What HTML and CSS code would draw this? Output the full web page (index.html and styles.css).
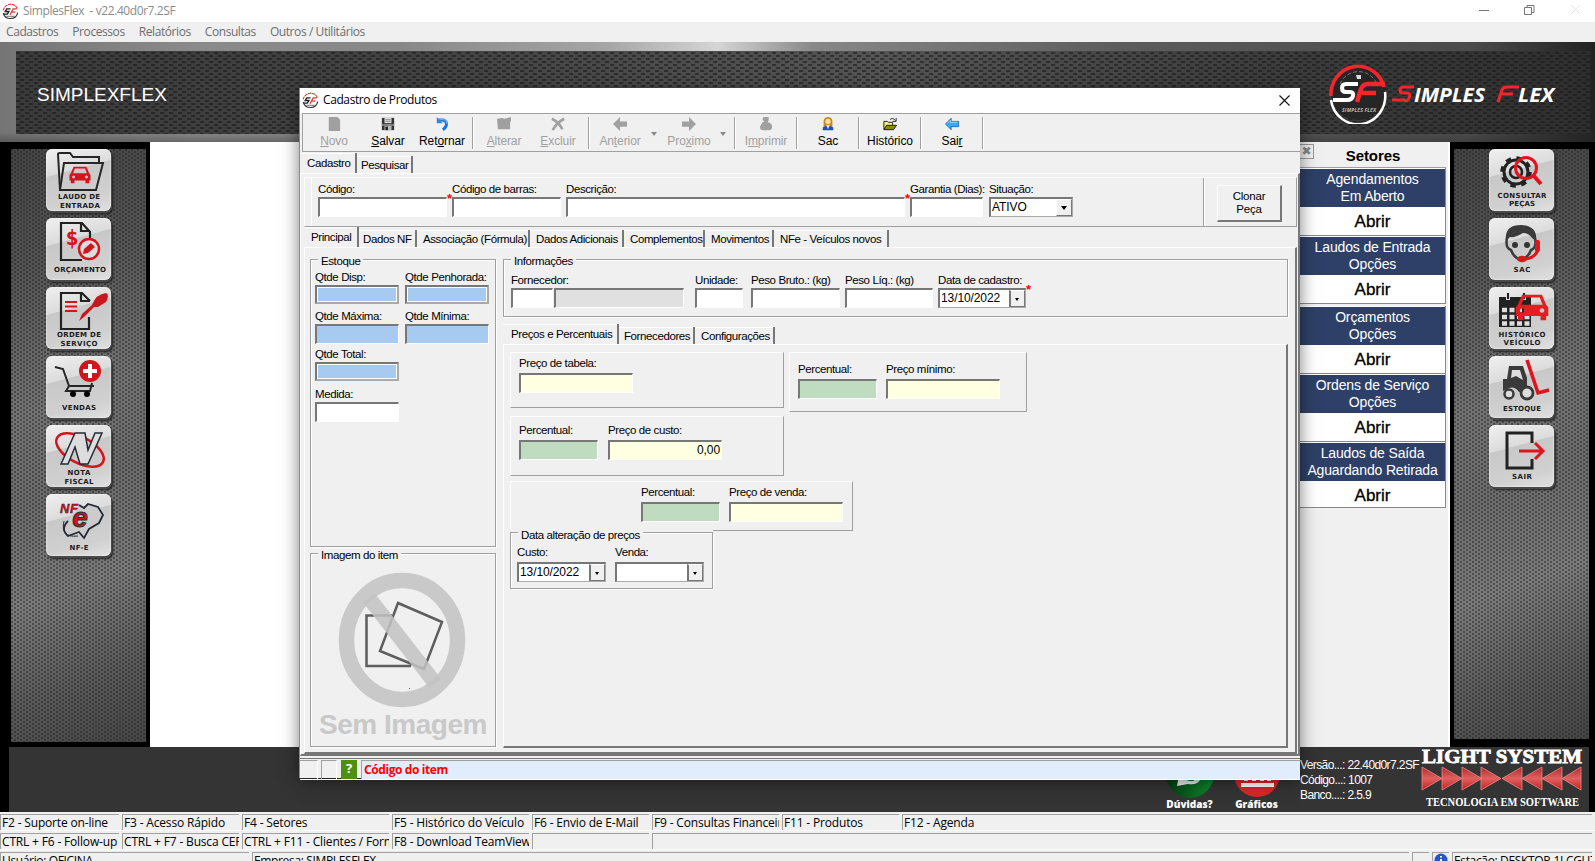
FILE: index.html
```
<!DOCTYPE html>
<html lang="pt-BR">
<head>
<meta charset="utf-8">
<title>SimplesFlex</title>
<link rel="stylesheet" href="styles.css">
</head>
<body>
<svg width="0" height="0" class="defs">
  <defs>
    <symbol id="sf" viewBox="0 0 16 16">
      <path d="M1.2 7A7 7 0 0 1 14.6 5.500" fill="none" stroke="#e33" stroke-width="1.100" stroke-dasharray="3 .6"/>
      <path d="M1.200 9.500A7 7 0 0 0 14.800 9" fill="none" stroke="#333" stroke-width="1.100"/>
      <path d="M8 5.500H4.500L3 8H6.500L5 10.500H1.500" fill="none" stroke="#222" stroke-width="1.300"/>
      <path d="M14 5.500H10.500L7.500 11M9.500 8.500H12.500" fill="none" stroke="#e33" stroke-width="1.200"/>
      <path d="M4 12.500h8" stroke="#777"/>
    </symbol>
    <symbol id="car" viewBox="0 0 24 20">
      <path d="M5 1h14l3 7 1.500 2v6H22v3h-4v-3H6v3H2v-3H.5v-6L2 8zM6.500 3L4.500 8h15l-2-5zM5 10.500a1.600 1.600 0 1 0 .1 0M19 10.500a1.600 1.600 0 1 0 .1 0" fill-rule="evenodd"/>
    </symbol>
  </defs>
</svg>
<div class="app">
  <header class="titlebar">
    <svg class="sf-icon" width="17" height="17"><use href="#sf"/></svg>
    <span class="caption">SimplesFlex&nbsp; - v22.40d0r7.2SF</span>
    <svg class="winbtns" width="120" height="20" fill="none" stroke="#777">
      <path d="M4 9.500h10"/><path d="M49.500 6.500h7v7h-7zM52 6V4.500h7v7H57"/><path stroke="#e4e4e4" d="M96 4l9 9M105 4l-9 9"/>
    </svg>
  </header>
  <nav class="menubar"><span>Cadastros</span><span>Processos</span><span>Relatórios</span><span>Consultas</span><span>Outros / Utilitários</span></nav>

  <section class="banner">
    <div class="banner-in">
      <span class="brand">SIMPLEXFLEX</span>
      <svg class="logo" width="232" height="62" viewBox="0 0 232 62">
        <circle cx="30" cy="31" r="27" fill="#262626"/>
        <path d="M3 34A27 28 0 0 1 56 25" fill="none" stroke="#f3262b" stroke-width="3.500"/>
        <path d="M57 30A27 28 0 0 1 3 38" fill="none" stroke="#fff" stroke-width="2.500"/>
        <path d="M12 22A20 20 0 0 1 48 20" fill="none" stroke="#777" stroke-dasharray="4 2"/>
        <path d="M28 13h5v4h-4z" fill="#ddd"/>
        <path d="M30 22H18Q14 22 14 26T18 30H22Q26 30 25 34T19 38H5" fill="none" stroke="#fff" stroke-width="4"/>
        <path d="M57 22H40Q35 22 33 27L29 40M34 31H48" fill="none" stroke="#f3262b" stroke-width="4.500"/>
        <text x="14" y="50" font-size="5" textLength="34" class="lt small">SIMPLES FLEX</text>
        <path d="M86 25H76Q72 25 72 28T75 31H80Q83 32 81 36T76 38H64" fill="none" stroke="#f3262b" stroke-width="3"/>
        <text x="86" y="40" font-size="20" textLength="71" lengthAdjust="spacingAndGlyphs" class="lt">IMPLES</text>
        <path d="M191 25H179Q175 25 174 28L170 40M174 32H185" fill="none" stroke="#f3262b" stroke-width="3"/>
        <text x="190" y="40" font-size="20" textLength="36" lengthAdjust="spacingAndGlyphs" class="lt">LEX</text>
      </svg>
    </div>
  </section>

  <main class="work">
    <aside class="rail rail-left">
      <div class="mesh">
        <svg class="tile" viewBox="0 0 65 62"><g fill="none" stroke="#262626" stroke-width="2"><path d="M14 41L12 5Q12 4 14 4H24L27 8H53V14"/><path d="M18 14H57L50 41H14Z"/></g><use href="#car" x="23" y="16" width="22" height="20" fill="#d4141c"/><text x="33" y="50" textLength="42">LAUDO DE</text><text x="34" y="59" textLength="40">ENTRADA</text></svg>
        <svg class="tile" viewBox="0 0 65 62"><path d="M44 22V14L36 5H15V42H36M35 5V13H43" fill="none" stroke="#222" stroke-width="2.200"/><text x="26" y="27" class="dollar">$</text><circle cx="43" cy="31" r="10" fill="#ddd" stroke="#d4141c" stroke-width="2.500"/><path d="M37 36l1-5 7-6 4 4-7 6z" fill="#d4141c"/><text x="34" y="54" textLength="52">ORÇAMENTO</text></svg>
        <svg class="tile" viewBox="0 0 65 62"><path d="M43 30V42H15V6H36L44 14M35 6V14H44" fill="none" stroke="#222" stroke-width="2.200"/><path d="M19 15h12M19 19.500h12M19 24h12" stroke="#d4141c" stroke-width="2"/><path d="M33 34L36 27 46 18Q50 7 60 6 64 8 60 15L52 20 48 20 38 30z" fill="#c9171f"/><text x="33" y="50" textLength="44">ORDEM DE</text><text x="33" y="59" textLength="37">SERVIÇO</text></svg>
        <svg class="tile" viewBox="0 0 65 62"><path d="M9 11L17 13 23 30H48M23 30L20 35H44L46 27" fill="none" stroke="#262626" stroke-width="2"/><circle cx="27" cy="38" r="3"/><circle cx="41" cy="38" r="3"/><circle cx="44" cy="15" r="11" fill="#d4141c"/><path d="M44 8v14M37 15h14" stroke="#fff" stroke-width="4"/><text x="33" y="54" textLength="34">VENDAS</text></svg>
        <svg class="tile" viewBox="0 0 65 62"><ellipse cx="34" cy="25" rx="26" ry="13" transform="rotate(28 34 25)" fill="none" stroke="#d4141c" stroke-width="2.500"/><path d="M15 39L29 8H39L42 25 49 8H56L42 39H34L29 22 22 39Z" fill="#ddd" stroke="#252b35" stroke-width="1.500"/><text x="33" y="50" textLength="23">NOTA</text><text x="33" y="59" textLength="29">FISCAL</text></svg>
        <svg class="tile" viewBox="0 0 65 62"><path d="M33 11L38 14 42 10 52 13 57 21 53 29 43 35 38 44 33 38 22 42Q14 35 22 27" fill="#ccc" stroke="#252b35" stroke-width="1.800"/><path d="M18 27Q14 44 32 42" fill="none" stroke="#252b35"/><text x="23" y="19" class="nf" textLength="18">NF</text><text x="34" y="33" class="nfe">e</text><text x="33" y="56" textLength="19">NF-E</text></svg>
      </div>
    </aside>
    <div class="canvas"></div>
    <section class="sectors">
      <div class="sec-head"><i class="close-x">✖</i><b>Setores</b></div>
      <div class="sec"><p>Agendamentos<br>Em Aberto</p><b>Abrir</b></div>
      <div class="sec"><p>Laudos de Entrada<br>Opções</p><b>Abrir</b></div>
      <div class="sec wide"><p>Orçamentos<br>Opções</p><b>Abrir</b></div>
      <div class="sec"><p>Ordens de Serviço<br>Opções</p><b>Abrir</b></div>
      <div class="sec last"><p>Laudos de Saída<br>Aguardando Retirada</p><b>Abrir</b></div>
    </section>
    <aside class="rail rail-right">
      <div class="mesh">
        <svg class="tile" viewBox="0 0 65 62"><circle cx="27" cy="23" r="12" fill="none" stroke="#222" stroke-width="3"/><circle cx="27" cy="23" r="14" fill="none" stroke="#222" stroke-width="3.500" stroke-dasharray="5.500 5.500"/><circle cx="27" cy="23" r="6" fill="none" stroke="#222" stroke-width="2.500"/><circle cx="37" cy="19" r="10.500" fill="none" stroke="#e0141c" stroke-width="3"/><path d="M44 26L52 35" stroke="#e0141c" stroke-width="4"/><text x="33" y="49" textLength="49">CONSULTAR</text><text x="33" y="57" textLength="26">PEÇAS</text></svg>
        <svg class="tile" viewBox="0 0 65 62"><path d="M17 23Q15 7 32 7 49 8 47 23L43 20Q40 15 34 15 26 20 21 19Z" fill="#3b3b3b"/><path d="M18 20Q16 30 22 32 25 40 32 42 39 40 42 32 48 30 46 20" fill="none" stroke="#3b3b3b" stroke-width="2.500"/><circle cx="26" cy="27" r="3" fill="#333"/><circle cx="38" cy="27" r="3" fill="#333"/><path d="M48 22V34Q45 40 36 41" fill="none" stroke="#e0141c" stroke-width="3"/><rect x="46" y="22" width="5" height="12" rx="2.500" fill="#e0141c"/><ellipse cx="33" cy="41" rx="5" ry="3.200" fill="#e0141c"/><text x="33" y="54" textLength="17">SAC</text></svg>
        <svg class="tile" viewBox="0 0 65 62"><path d="M10 10H42V40H10Z" fill="#222"/><path d="M19 6v7M35 6v7" stroke="#ddd" stroke-width="4"/><path d="M19 6v6M35 6v6" stroke="#222" stroke-width="2"/><g stroke="#ddd" stroke-width="4.500" stroke-dasharray="5 2.500"><path d="M13 23h28M13 30h28M13 36.500h28"/></g><use href="#car" x="26" y="6" width="34" height="29" fill="#e81c20"/><text x="33" y="50" textLength="47">HISTÓRICO</text><text x="33" y="58" textLength="37">VEÍCULO</text></svg>
        <svg class="tile" viewBox="0 0 65 62"><path d="M14 35V23H18L20 10H34L38 22V36H30Q26 30 20 32Z" fill="#3a3a3a"/><path d="M23 14H31L34 24 27 20 22 22Z" fill="#ddd"/><circle cx="20" cy="38" r="4.500" fill="#ddd" stroke="#3a3a3a" stroke-width="2.500"/><circle cx="38" cy="37" r="6" fill="#ddd" stroke="#3a3a3a" stroke-width="2.800"/><path d="M38 4L49 37 60 34" fill="none" stroke="#e0141c" stroke-width="3.500"/><text x="33" y="55" textLength="38">ESTOQUE</text></svg>
        <svg class="tile" viewBox="0 0 65 62"><path d="M43 18V8H18V43H43V34" fill="none" stroke="#222" stroke-width="3"/><path d="M30 26H53M46 18L54 26 46 34" fill="none" stroke="#e0141c" stroke-width="3"/><text x="33" y="54" textLength="20">SAIR</text></svg>
      </div>
    </aside>
  </main>

  <section class="foot">
    <div class="round"><svg width="50" height="32" viewBox="0 0 50 32"><defs><linearGradient id="gg"><stop stop-color="#063b10"/><stop offset="1" stop-color="#0c8a2c"/></linearGradient></defs><circle cx="25" cy="7" r="24" fill="url(#gg)"/><path d="M12 19L14 8H37Q35 19 23 17Z" fill="#eee"/><path d="M20 8Q22 14 29 12" stroke="#0a6a20" stroke-width="3" fill="none"/></svg><b>Dúvidas?</b></div>
    <div class="round"><svg width="50" height="32" viewBox="0 0 50 32"><circle cx="25" cy="7" r="23" fill="#dc2626"/><path d="M14 4v10M22 4v10M30 4v10M37 4v10" stroke="#fff" stroke-width="4"/><path d="M9 18h33" stroke="#fff" stroke-width="4"/></svg><b>Gráficos</b></div>
    <div class="vers">Versão...: 22.40d0r7.2SF<br>Código...: 1007<br>Banco....: 2.5.9</div>
    <svg class="light" width="166" height="65" viewBox="0 0 166 65">
      <defs><linearGradient id="lr" x2="0" y2="1"><stop stop-color="#b02a2a"/><stop offset=".5" stop-color="#e06060"/><stop offset="1" stop-color="#c42020"/></linearGradient></defs>
      <text x="2" y="16" class="l1" textLength="160" lengthAdjust="spacingAndGlyphs">LIGHT SYSTEM</text>
      <path d="M2 20l20 11.500L2 43zM22 20l20 11.500L22 43zM42 20l20 11.500L42 43zM61 20l20 11.500L61 43zM102 20L82 31.500 102 43zM122 20l-20 11.500 20 11.500zM142 20l-20 11.500 20 11.500zM161 20l-19 11.500 19 11.500z" fill="url(#lr)" stroke="#e88" stroke-width=".8"/>
      <text x="6" y="59" class="l2" textLength="153" lengthAdjust="spacingAndGlyphs">TECNOLOGIA EM SOFTWARE</text>
    </svg>
  </section>

  <footer class="status">
    <div class="srow r1"><span>F2 - Suporte on-line</span><span>F3 - Acesso Rápido</span><span>F4 - Setores</span><span>F5 - Histórico do Veículo</span><span>F6 - Envio de E-Mail</span><span>F9 - Consultas Financeiras</span><span>F11 - Produtos</span><span>F12 - Agenda</span></div>
    <div class="srow r2"><span>CTRL + F6 - Follow-up</span><span>CTRL + F7 - Busca CEP</span><span>CTRL + F11 - Clientes / Fornecedores</span><span>F8 - Download TeamViewer</span><span></span><span></span></div>
    <div class="srow r3"><span>Usuário: OFICINA</span><span>Empresa: SIMPLESFLEX</span><span></span><span class="info"><svg width="14" height="14"><circle cx="7" cy="7" r="6.500" fill="#2456c8"/><path d="M7 3v1.500M7 6v5" stroke="#fff" stroke-width="2"/></svg></span><span>Estação: DESKTOP-1LCGU7</span></div>
  </footer>
</div>

<section class="dialog">
  <header class="dtitle">
    <svg width="17" height="17"><use href="#sf"/></svg><span>Cadastro de Produtos</span>
    <svg class="dclose" width="11" height="11" stroke="#111" stroke-width="1.100"><path d="M.5.5l10 10M10.500.5l-10 10"/></svg>
  </header>
  <div class="toolbar">
    <div class="tb off"><svg viewBox="0 0 16 16"><path d="M2 0h10l3 3v13H2z" fill="#a0a0a0"/></svg><span><u>N</u>ovo</span></div>
    <div class="tb"><svg viewBox="0 0 16 16"><path d="M1 1h14v14H1z" fill="#333"/><path d="M4 1h8v6H4z" fill="#ddd"/><path d="M5 3h6M5 5h6" stroke="#888"/><path d="M1 8h14v2H1z" fill="#888"/><path d="M4 10h8v5H4z" fill="#bbb"/><path d="M5 11h3v4H5z" fill="#222"/></svg><span><u>S</u>alvar</span></div>
    <div class="tb"><svg viewBox="0 0 16 16"><path d="M4 3.500h5q5 1 4 6-1 3-4 5" fill="none" stroke="#1c6fe0" stroke-width="3.400"/><path d="M2 0v7h7z" fill="#2f86f0"/><path d="M5 3h5q4 1 3.500 5" fill="none" stroke="#7cc0ff"/></svg><span>Ret<u>o</u>rnar</span></div>
    <i class="sep"></i>
    <div class="tb off"><svg viewBox="0 0 16 16"><path d="M0 2l6-1 3 1 7-2v4l-1 2v8H1z" fill="#a0a0a0"/></svg><span><u>A</u>lterar</span></div>
    <div class="tb off"><svg viewBox="0 0 16 16"><path d="M1 2q8 4 12 12M15 2Q6 7 2 15" fill="none" stroke="#a0a0a0" stroke-width="3"/></svg><span><u>E</u>xcluir</span></div>
    <i class="sep"></i>
    <div class="tb off"><svg viewBox="0 0 16 16"><path d="M0 8l8-8v5h8v6H8v5z" fill="#a0a0a0"/></svg><span>An<u>t</u>erior</span></div><i class="dd"></i>
    <div class="tb off"><svg viewBox="0 0 16 16"><path d="M16 8L8 0v5H0v6h8v5z" fill="#a0a0a0"/></svg><span>Pro<u>x</u>imo</span></div><i class="dd"></i>
    <i class="sep"></i>
    <div class="tb off"><svg viewBox="0 0 16 16"><path d="M5 0h6v4l-1 2q5 1 5 5t-4 4H5q-4 0-4-4l3-5 2-1-2-2z" fill="#a0a0a0"/></svg><span>I<u>m</u>primir</span></div>
    <i class="sep"></i>
    <div class="tb"><svg viewBox="0 0 16 16"><path d="M3 8q-1-8 5-8t5 8v3H3z" fill="#c98a1c"/><circle cx="8" cy="5" r="3" fill="#ffdda0"/><path d="M2 15v-3q3-3 6-1 3-2 6 1v3z" fill="#1f4fc0"/><path d="M6 9h4l-2 5z" fill="#f7e6c0"/></svg><span>Sac</span></div>
    <i class="sep"></i>
    <div class="tb"><svg viewBox="0 0 16 16"><path d="M1 14V5h4l1 1h5v3" fill="#f2ec8c" stroke="#111"/><path d="M1 14.500L4 9.500h11.500L12 14.500z" fill="#8d8a14" stroke="#111"/><path d="M8 3q3-3 6 1M15 1v4h-4" fill="none" stroke="#111"/></svg><span>Histórico</span></div>
    <i class="sep"></i>
    <div class="tb"><svg viewBox="0 0 16 16"><path d="M.6 8L7 1.500V5h8.500v6H7v3.500z" fill="#3fa9e8" stroke="#1a6cb0"/><path d="M3 7l3-3v2h8" fill="none" stroke="#a5dcff"/></svg><span>Sai<u>r</u></span></div>
    <i class="sep"></i>
  </div>
  <div class="tabs t1"><span class="on">Cadastro</span><span>Pesquisar</span></div>
  <div class="page page1">
    <div class="keybar">
      <div class="keys">
        <label class="f req w129">Código:<i class="in"></i></label>
        <label class="f w109">Código de barras:<i class="in"></i></label>
        <label class="f req w339">Descrição:<i class="in"></i></label>
        <label class="f w73">Garantia (Dias):<i class="in"></i></label>
        <label class="f w84">Situação:<i class="in combo">ATIVO<b></b></i></label>
      </div>
      <div class="clone"><button>Clonar<br>Peça</button></div>
    </div>
    <div class="tabs t2"><span class="on">Principal</span><span>Dados NF</span><span>Associação (Fórmula)</span><span>Dados Adicionais</span><span>Complementos</span><span>Movimentos</span><span>NFe - Veículos novos</span></div>
    <div class="page page2">
      <div class="colL">
        <div class="group estoque"><span class="legend">Estoque</span>
          <div class="q q1"><label class="f">Qtde Disp:<i class="in blue ring"></i></label><label class="f">Qtde Penhorada:<i class="in blue ring"></i></label></div>
          <div class="q q2"><label class="f">Qtde Máxima:<i class="in blue"></i></label><label class="f">Qtde Mínima:<i class="in blue"></i></label></div>
          <div class="q q3"><label class="f">Qtde Total:<i class="in blue ring"></i></label></div>
          <div class="q q4"><label class="f">Medida:<i class="in"></i></label></div>
        </div>
        <div class="group imagem"><span class="legend">Imagem do item</span>
          <svg width="183" height="180" viewBox="0 0 183 180">
            <ellipse cx="91" cy="78" rx="55.500" ry="59.500" fill="none" stroke="#c9c9c9" stroke-width="15.500"/>
            <g fill="none" stroke="#5e5e5e" stroke-width="2.500"><path d="M81 53.500H55.500V104H100"/><path d="M87 41L131 60 113 107 69 89Z"/></g>
            <path d="M58 36L124 121" stroke="#c3c3c3" stroke-width="15" opacity=".85"/>
            <text x="8" y="172" textLength="168" class="semimg">Sem Imagem</text>
            <path d="M98 126.500h1" stroke="#d0d"/>
          </svg>
        </div>
      </div>
      <div class="colR">
        <div class="group infos"><span class="legend">Informações</span>
          <div class="inforow">
            <label class="f w42">Fornecedor:<i class="in"></i></label><i class="in grey"></i>
            <label class="f w48">Unidade:<i class="in"></i></label>
            <label class="f w89">Peso Bruto.: (kg)<i class="in"></i></label>
            <label class="f w88">Peso Líq.: (kg)<i class="in"></i></label>
            <label class="f req w88">Data de cadastro:<i class="in combo date">13/10/2022<b></b></i></label>
          </div>
        </div>
        <div class="tabs t3"><span class="on">Preços e Percentuais</span><span>Fornecedores</span><span>Configurações</span></div>
        <div class="page page3">
          <div class="prow">
            <div class="pan pa"><label class="f w114">Preço de tabela:<i class="in yel"></i></label></div>
            <div class="pan pb"><label class="f w79">Percentual:<i class="in grn"></i></label><label class="f w114">Preço mínimo:<i class="in yel"></i></label></div>
          </div>
          <div class="pan pc"><label class="f w79">Percentual:<i class="in grn"></i></label><label class="f w114">Preço de custo:<i class="in yel num">0,00</i></label></div>
          <div class="pan pd"><label class="f w79">Percentual:<i class="in grn"></i></label><label class="f w114">Preço de venda:<i class="in yel"></i></label></div>
          <div class="group datas"><span class="legend">Data alteração de preços</span>
            <div class="drow"><label class="f w89">Custo:<i class="in combo date">13/10/2022<b></b></i></label><label class="f w89">Venda:<i class="in combo date"><b></b></i></label></div>
          </div>
        </div>
      </div>
    </div>
  </div>
  <footer class="dstatus"><i class="c1"></i><i class="c2"></i><i class="help">?</i><b>Código do item</b></footer>
</section>
</body>
</html>
```
FILE: styles.css
```
*{box-sizing:border-box}
html,body{margin:0;height:861px;overflow:hidden;background:#f0f0f0}
body{position:relative;width:1595px;font:12px/14px "Open Sans","Noto Sans",sans-serif;color:#000}
svg{display:block}
i{font-style:normal}
.defs{position:absolute}
.app{width:1595px;height:861px;display:flex;flex-direction:column;overflow:hidden}
.titlebar{height:22px;background:#fff;display:flex;align-items:center;padding-left:2px;color:#8c8c8c;flex:none}
.caption{margin-left:4px;letter-spacing:-.42px}
.winbtns{margin-left:auto}
.menubar{height:20px;flex:none;display:flex;gap:14px;padding-left:6px;line-height:20px;color:#6d6d6d;background:#f0f0f0;letter-spacing:-.42px}
.banner{height:100px;flex:none;padding:9px 5px 8px 16px;background:linear-gradient(transparent 90px,rgba(40,40,40,.35)),linear-gradient(90deg,#757575 0,#8a8a8a 12%,#888 25%,#a5a5a5 38%,#d5d5d5 45%,#888 51%,#5c5c5c 70%,#4c4c4c 92%,#222 100%)}
.banner-in{height:83px;display:flex;align-items:center;padding:1px 30px 0 21px;
  background:radial-gradient(ellipse 3px 1.200px at 2px 2px,rgba(24,24,24,.6) 60%,transparent) 0 0/9px 6px,radial-gradient(ellipse 3px 1.200px at 6px 5px,rgba(24,24,24,.6) 60%,transparent) 0 0/9px 6px,linear-gradient(90deg,#3a3a3a,#454545 30%,#555 55%,#3c3c3c 80%,#2e2e2e)}
.brand{color:#fff;font:19px/20px "Liberation Sans",sans-serif;letter-spacing:0;padding-top:3px}
.logo{margin-left:auto}
.lt{font-family:"Open Sans",sans-serif;font-weight:700;font-style:italic;fill:#fff}
.lt.small{fill:#bbb}
.work{height:605px;flex:none;display:flex}
.rail{background:#000;flex:none}
.rail-left{width:150px;padding:7px 4px 5px 11px}
.rail-right{width:145px;padding:7px 6px 8px 4px}
.mesh{height:100%;padding-left:35px;display:flex;flex-direction:column;gap:7px;
  background:radial-gradient(circle 1.300px at 1px 1px,rgba(30,30,30,.55) 50%,transparent) 0 0/6px 4px,radial-gradient(circle 1.300px at 4px 3px,rgba(30,30,30,.55) 50%,transparent) 0 0/6px 4px,linear-gradient(160deg,#444,#545454 20%,#747474 42%,#6c6c6c 56%,#7c7c7c 72%,#585858 88%,#464646)}
.tile{width:65px;height:62px;flex:none;border-radius:6px;background:linear-gradient(165deg,#f0f0f0,#dcdcdc 35%,#c8c8c8 36%,#d0d0d0 75%,#e0e0e0);box-shadow:1px 2px 0 #4a4a4a,2px 3px 2px #222,inset 0 0 2px #fff}
.tile text{font:700 7px "DejaVu Sans",sans-serif;text-anchor:middle;fill:#1c1c1c}
.tile .dollar{font:700 22px "DejaVu Sans Mono",monospace;fill:#d4141c}
.tile .nf{font:italic 700 13px "Liberation Sans",sans-serif;fill:#d4141c;stroke:#252b35;stroke-width:.5}
.tile .nfe{font:italic 700 28px "Liberation Sans",sans-serif;fill:#d4141c;stroke:#252b35;stroke-width:1}
.canvas{flex:1;background:#fff}
.sectors{width:152px;flex:none;background:#f0f0f0;border-right:2px solid #fff;font:16px/17px "Liberation Sans",sans-serif;text-align:center;padding-right:2px}
.sec-head{height:25px;display:flex;align-items:center;margin-top:1px;padding-left:1px;border-bottom:1px solid #a0a0a0}
.close-x{width:15px;height:15px;border:1px solid #999;color:#888;font:12px/12px "DejaVu Sans",sans-serif;margin-top:-7px}
.sec-head b{flex:1;font-size:15px;letter-spacing:-.1px;padding-right:14px}
.sec{height:68px;padding-top:1px;background:#fff;border-right:1px solid #888;border-bottom:1px solid #888}
.sec.wide{height:68px;margin-top:2px}
.sec.last{height:66px}
.sec p{height:38px;margin:0;padding:2px 0 0 2px;background:#2e4067;color:#fff;font-size:14px;letter-spacing:-.15px}
.sec b{display:block;padding-left:2px;line-height:29px;font-weight:400;font-size:17px;-webkit-text-stroke:.3px #000}
.foot{height:65px;flex:none;background:#343434;border-left:9px solid #000;border-right:6px solid #000;padding-right:3px;display:flex;justify-content:flex-end}
.round{width:67px;padding-top:20px;display:flex;flex-direction:column;align-items:center;color:#fff;font:700 10px/10px "Open Sans",sans-serif;letter-spacing:0}
.vers{width:120px;margin-left:10px;padding-top:11px;color:#fff;font:12px/15px "Liberation Sans",sans-serif;letter-spacing:-.6px;white-space:nowrap}
.light text{fill:#fff;font-family:"Liberation Serif",serif;font-weight:700}
.light .l1{font-size:19px;stroke:#fff;stroke-width:.8}
.light .l2{font-size:12px}
.status{flex:1;background:#f0f0f0}
.srow{height:19px;display:grid;padding-top:2px;border-bottom:1px solid #fff;letter-spacing:-.17px}
.r1{grid-template-columns:122px 120px 150px 140px 120px 130px 120px 1fr}
.r2{grid-template-columns:122px 120px 150px 140px 120px 1fr}
.r3{grid-template-columns:252px 1160px 20px 20px 1fr;letter-spacing:-.35px}
.srow span{height:16px;border-top:1px solid #a0a0a0;border-left:1px solid #a0a0a0;margin-right:3px;padding-left:1px;line-height:15px;white-space:nowrap;overflow:hidden}
.srow .info{padding:0 0 0 1px}

.dialog{position:absolute;left:299px;top:88px;width:1001px;height:690px;background:#f0f0f0;border-left:1px solid #8a8a8a;box-shadow:0 3px 16px rgba(0,0,0,.5);display:flex;flex-direction:column;font:11.500px/14px "Liberation Sans",sans-serif;letter-spacing:-.4px;white-space:nowrap}
.dtitle{height:25px;flex:none;background:#fff;display:flex;align-items:center;padding:0 10px 1px 2px;font:12px/14px "Open Sans",sans-serif;letter-spacing:-.4px}
.dtitle span{margin-left:4px}
.dclose{margin-left:auto}
.toolbar{height:39px;flex:none;border-top:1px solid #a0a0a0;border-bottom:1px solid #a0a0a0;margin-left:2px;padding:3px 0 2px 4px;display:flex;border-left:1px solid #a0a0a0;font-size:12px;letter-spacing:-.1px}
.tb{width:54px;display:flex;flex-direction:column;align-items:center;gap:2px}
.tb svg{width:16px;height:16px}
.tb span{line-height:16px}
.tb.off{color:#a0a0a0}
.sep{width:8px;border-left:1px solid #a0a0a0;box-shadow:inset 1px 0 #fff;margin-left:3px;margin-right:-3px}
.dd{width:15px;padding:15px 0 0 4px}
.dd::after{content:"";display:block;width:0;border:3.500px solid transparent;border-top:4px solid #8a8a8a;border-bottom:0}
.tabs{display:flex;flex:none;align-items:flex-end;height:21px}
.tabs span{height:17px;line-height:18px;padding:0 5px 0 5px;border-right:2px solid #777;box-shadow:inset 0 1px #fff}
.tabs .on{height:20px;line-height:20px}
.t1 .on{width:57px;padding-left:7px}
.t1 span:nth-child(2){width:56px;padding-left:4px}
.t2{height:20px}
.t2 .on{width:55px;padding-left:7px}
.t2 span:nth-child(2){width:58px;padding-left:4px}
.t2 span:nth-child(3){width:113px;padding-left:6px}
.t2 span:nth-child(4){width:94px;padding-left:6px}
.t2 span:nth-child(5){width:81px;padding-left:6px}
.t2 span:nth-child(6){width:69px;padding-left:6px}
.t2 span:nth-child(7){width:115px;padding-left:6px}
.t3{height:27px}
.t3 .on{width:116px;padding-left:8px}
.t3 span:nth-child(2){width:76px}
.t3 span:nth-child(3){width:80px;padding-left:6px}
.page{border-top:1px solid #fff;border-left:1px solid #fff;border-right:2px solid #777;border-bottom:2px solid #777}
.page1{height:583px;flex:none;padding:3px 1px 1px 3px}
.keybar{height:50px;display:flex;border:1px solid #fff;border-right-color:#a0a0a0;border-bottom-color:#a0a0a0;padding-left:6px}
.keys{flex:1;border-left:1px solid #fff;display:flex;padding:4px 0 0 6px;gap:5px}
.keys label:nth-child(5){margin-left:1px}
.clone{width:93px;border-left:1px solid #a0a0a0;box-shadow:inset 1px 0 #fff;padding:7px 13px}
.clone button{width:65px;height:37px;padding:0;background:#f0f0f0;border:1px solid #fff;border-right:2px solid #777;border-bottom:2px solid #777;font:inherit;letter-spacing:-.2px;line-height:13px}
.f{display:flex;flex-direction:column;gap:1px;line-height:14px;position:relative}
.req::after{content:"*";position:absolute;right:-5px;top:10px;color:red;font:700 13px/14px "Liberation Sans",sans-serif;letter-spacing:0}
.in{display:block;height:20px;background:#fff;border:1px solid #fff;border-top:2px solid #777;border-left:2px solid #777;font-size:12px;letter-spacing:-.1px;line-height:16px;padding:0 1px}
.w129{width:129px}.w109{width:109px}.w339{width:339px}.w73{width:73px}.w84{width:84px}
.w42{width:42px}.w48{width:48px}.w89{width:89px}.w88{width:88px}.w114{width:114px}.w79{width:79px}
.blue{background:#a6caf0}
.yel{background:#ffffe1}
.grn{background:#c0dcc0}
.grey{background:#e0e0e0}
.num{text-align:right}
.in.ring{height:19px;border:2px solid #777;border-right-color:#aaa;border-bottom-color:#aaa;box-shadow:inset 0 0 0 1px #fff}
.combo{display:flex;justify-content:space-between;border-right:1px solid #aaa;border-bottom:1px solid #aaa;padding-right:0}
.combo b{width:16px;margin-left:auto;background:#f0f0f0;border:1px solid #fff;border-right-color:#777;border-bottom-color:#777;padding:6px 0 0 4px}
.combo b::after{content:"";display:block;width:0;border:3.500px solid transparent;border-top:4px solid #000;border-bottom:0}
.date b{border-left:2px solid #777;padding:7px 0 0 4px}
.date b::after{border-width:3px 2.500px 0}
.page2{height:507px;display:flex;gap:7px;padding:11px 0 0 5px}
.colL{width:186px}
.group{border:1px solid #a0a0a0;box-shadow:inset 1px 1px #fff,1px 1px #fff}
.legend{display:block;width:max-content;height:14px;margin:-6px 0 0 7px;padding:0 3px;background:#f0f0f0}
.estoque{height:288px}
.q{display:flex;gap:6px;padding-left:4px}
.q .f{width:84px}
.q1{margin-top:2px;height:35px}.q2{margin-top:4px}.q3{margin-top:3px;height:35px}.q4{margin-top:5px}
.imagem{height:194px;margin-top:6px}
.semimg{font:700 28px "Liberation Sans",sans-serif;fill:#c9c9c9}
.colR{width:785px}
.infos{height:58px}
.inforow{display:flex;padding:5px 0 0 7px;align-items:flex-end}
.inforow .grey{width:130px;margin:0 11px 0 1px}
.inforow label:nth-of-type(2){margin-right:8px}
.inforow label:nth-of-type(3),.inforow label:nth-of-type(4){margin-right:5px}
.page3{height:404px;padding:7px 0 0 6px}
.prow{display:flex;gap:5px;height:60px}
.pan{display:flex;gap:9px;border:1px solid #fff;border-right-color:#a0a0a0;border-bottom-color:#a0a0a0;padding-left:8px}
.pan .f,.drow .f{gap:3px}
.pa{width:274px;height:56px;padding-top:3px}
.pb{width:238px;padding-top:9px}
.pc{gap:10px;width:274px;height:60px;margin-top:4px;padding-top:6px}
.pd{width:343px;height:50px;margin-top:5px;padding:3px 0 0 130px}
.datas{position:relative;width:203px;height:57px;margin-top:1px;background:#f0f0f0}
.datas::before{content:"";position:absolute;left:-1px;right:-1px;top:-4px;height:3px;background:#f0f0f0}
.datas .legend{position:relative;margin-top:-5px}
.drow{display:flex;gap:9px;padding:3px 0 0 6px}
.dstatus{flex:1;display:flex;margin-top:2px;padding-top:1px;border-top:1px solid #777;border-bottom:1px solid #fff}
.dstatus>*{border-top:1px solid #a0a0a0}
.c1{width:18px;border-right:1px solid #fff}
.c2{width:16px;margin:0 4px 0 3px;border-left:1px solid #a0a0a0;border-right:1px solid #fff}
.dstatus .help{width:16px;background:#4f8f12;color:#fff;font:700 13px/17px "Open Sans",sans-serif;text-align:center;border:0;letter-spacing:0}
.dstatus b{flex:1;margin-left:4px;padding-left:2px;background:#e1edfc;border-left:1px solid #a0a0a0;color:red;font:700 12px/18px "Open Sans",sans-serif;letter-spacing:-.4px}
```
